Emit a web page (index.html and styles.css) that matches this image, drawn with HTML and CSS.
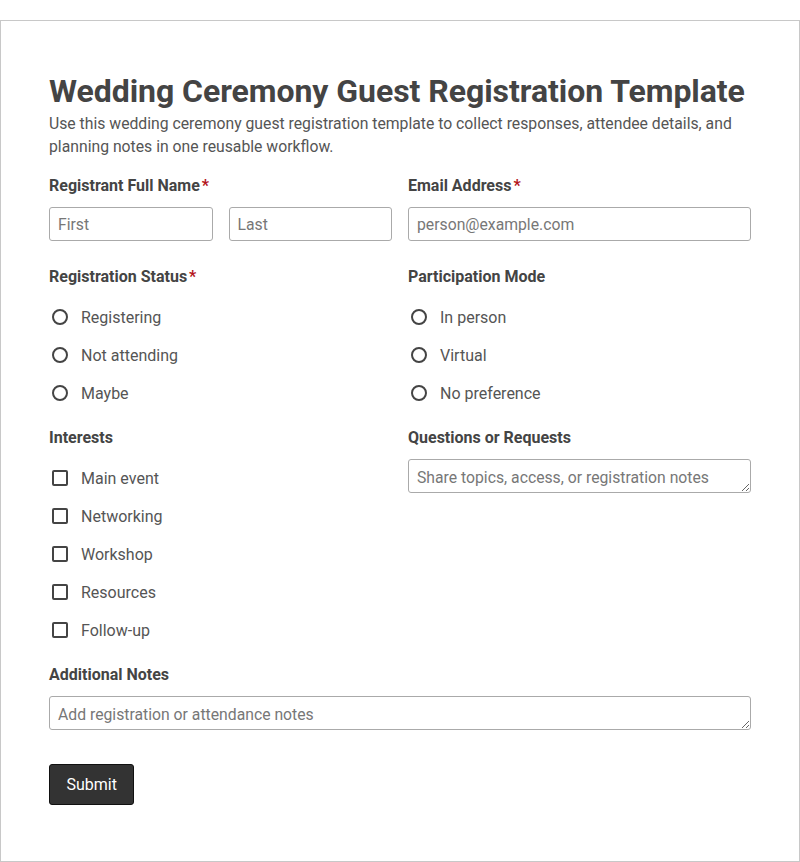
FILE: index.html
```html
<!DOCTYPE html>
<html lang="en">
<head>
<meta charset="UTF-8"/>
<meta name="viewport" content="width=device-width,initial-scale=1.0"/>
<title>Wedding Ceremony Guest Registration Template</title>
<link rel="stylesheet" href="styles.css">
</head>
<body>

<form class="card" onsubmit="return false">
  <h1 class="title">Wedding Ceremony Guest Registration Template</h1>
  <p class="intro">Use this wedding ceremony guest registration template to collect responses, attendee details, and planning notes in one reusable workflow.</p>

  <div class="fields">
    <!-- row 1 -->
    <div class="field row-input">
      <label class="label">Registrant Full Name<span class="req">*</span></label>
      <div class="name-pair">
        <input class="input" type="text" placeholder="First">
        <input class="input" type="text" placeholder="Last">
      </div>
    </div>
    <div class="field row-input">
      <label class="label" for="email">Email Address<span class="req">*</span></label>
      <input class="input" id="email" type="email" placeholder="person@example.com">
    </div>

    <!-- row 2 -->
    <div class="field">
      <span class="label">Registration Status<span class="req">*</span></span>
      <div class="options">
        <label class="option"><input type="radio" name="status"><span>Registering</span></label>
        <label class="option"><input type="radio" name="status"><span>Not attending</span></label>
        <label class="option"><input type="radio" name="status"><span>Maybe</span></label>
      </div>
    </div>
    <div class="field">
      <span class="label">Participation Mode</span>
      <div class="options">
        <label class="option"><input type="radio" name="mode"><span>In person</span></label>
        <label class="option"><input type="radio" name="mode"><span>Virtual</span></label>
        <label class="option"><input type="radio" name="mode"><span>No preference</span></label>
      </div>
    </div>

    <!-- row 3 -->
    <div class="field">
      <span class="label">Interests</span>
      <div class="options">
        <label class="option"><input type="checkbox"><span>Main event</span></label>
        <label class="option"><input type="checkbox"><span>Networking</span></label>
        <label class="option"><input type="checkbox"><span>Workshop</span></label>
        <label class="option"><input type="checkbox"><span>Resources</span></label>
        <label class="option"><input type="checkbox"><span>Follow-up</span></label>
      </div>
    </div>
    <div class="field">
      <label class="label" for="questions">Questions or Requests</label>
      <textarea class="input area" id="questions" rows="1" placeholder="Share topics, access, or registration notes"></textarea>
    </div>

    <!-- row 4 -->
    <div class="field wide">
      <label class="label" for="notes">Additional Notes</label>
      <textarea class="input area" id="notes" rows="1" placeholder="Add registration or attendance notes"></textarea>
    </div>
  </div>

  <button class="submit" type="submit">Submit</button>
</form>

</body>
</html>
```

FILE: styles.css
```css
*{box-sizing:border-box}
body{margin:20px 0 0;background:#fff;color:#444;font-family:Roboto,"Liberation Sans",sans-serif}

/* ---------- card ---------- */
.card{
  width:800px;border:1px solid #c8c8c8;
  padding:50px 48px 56px
}
.title{margin:0;font-size:32px;line-height:40px;font-weight:700;color:#444;letter-spacing:-.05px}
.intro{margin:1px 0 0;font-size:15.75px;line-height:23px;color:#555}

/* ---------- grid of fields ---------- */
.fields{
  display:grid;grid-template-columns:1fr 1fr;
  column-gap:16px;row-gap:23px;margin-top:18px
}
.field{display:flex;flex-direction:column;min-width:0}
.field.wide{grid-column:1 / -1}
.row-input{padding-bottom:3px}

.label{display:block;margin-bottom:11px;font-size:16px;line-height:20px;font-weight:700;color:#444}
.req{color:#b3141b;margin-left:2px}

.name-pair{display:grid;grid-template-columns:1fr 1fr;gap:16px}

.input{
  display:block;width:100%;height:34px;margin:0;
  padding:0 8px;border:1px solid #aaa;border-radius:3px;
  font:15.75px/20px Roboto,"Liberation Sans",sans-serif;color:#444;background:#fff
}
.input::placeholder{color:#777}
.area{padding:8px 8px 4px;resize:vertical}

/* ---------- radio / checkbox ---------- */
.options{display:flex;flex-direction:column;gap:14px;padding-top:7px}
.option{display:flex;align-items:center;height:24px;font-size:16px;color:#555;cursor:pointer}
.option span{margin-left:13px}
.option input{
  appearance:none;-webkit-appearance:none;margin:0 0 0 3px;
  width:16px;height:16px;border:2px solid #444;background:#fff;flex:none
}
.option input[type=radio]{border-radius:50%}
.option input[type=checkbox]{border-radius:2px}
.option input:checked{background:#444;box-shadow:inset 0 0 0 2px #fff}

/* ---------- submit ---------- */
.submit{
  margin-top:34px;height:41px;padding:0 16.5px;
  background:#333;color:#fff;border:1px solid #111;border-radius:3px;
  font:16px Roboto,"Liberation Sans",sans-serif;cursor:pointer
}
.submit:hover{background:#222}
```
